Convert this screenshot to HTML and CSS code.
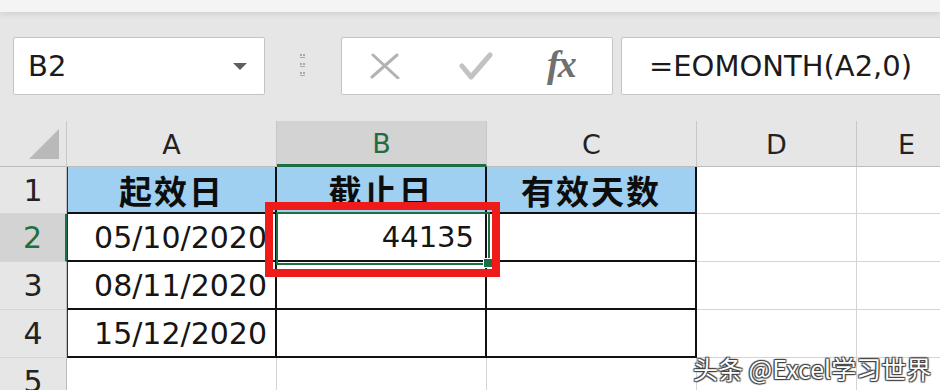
FILE: index.html
```html
<!DOCTYPE html>
<html lang="zh">
<head>
  <meta charset="UTF-8" />
  <title>EOMONTH</title>
  <link rel="stylesheet" href="styles.css">
</head>
<body>
  <div class="top"></div>

  <div class="fbar">
    <div class="namebox">
      <span>B2</span>
      <svg class="caret" width="14" height="8" viewBox="0 0 14 8"><path d="M0 0 L14 0 L7 7 Z" fill="#5f5f5f"/></svg>
    </div>
    <div class="grip">
      <svg width="8" height="26" viewBox="0 0 8 26">
        <g fill="#a8a8a8">
          <rect x="1" y="1" width="2" height="2"/><rect x="4" y="1" width="2" height="2"/><rect x="1" y="4" width="5" height="1"/>
          <rect x="1" y="10" width="2" height="2"/><rect x="4" y="10" width="2" height="2"/><rect x="1" y="13" width="5" height="1"/>
          <rect x="1" y="19" width="2" height="2"/><rect x="4" y="19" width="2" height="2"/><rect x="1" y="22" width="5" height="1"/>
        </g>
      </svg>
    </div>
    <div class="fxbtns">
      <svg class="ic-x" width="30" height="26" viewBox="0 0 30 26">
        <path d="M3 2 L28 25 M27 2 L2 24" stroke="#b3b3b3" stroke-width="3" stroke-linecap="round" fill="none"/>
      </svg>
      <svg class="ic-ok" width="34" height="28" viewBox="0 0 34 28">
        <path d="M3 14 L12 25 L31 3" stroke="#c2c2c2" stroke-width="5" stroke-linecap="round" stroke-linejoin="round" fill="none"/>
      </svg>
      <span class="ic-fx">fx</span>
    </div>
    <div class="formula">=EOMONTH(A2,0)</div>
  </div>

  <div class="sheet">
    <div class="ch corner"><svg width="32" height="32" viewBox="0 0 32 32"><path d="M1 31 L31 31 L31 1 Z" fill="#b9b9b9"/></svg></div>
    <div class="ch">A</div>
    <div class="ch sel">B</div>
    <div class="ch">C</div>
    <div class="ch">D</div>
    <div class="ch">E</div>

    <div class="rh">1</div>
    <div class="c t a h">起效日</div>
    <div class="c t h">截止日</div>
    <div class="c t h">有效天数</div>
    <div class="c"></div>
    <div class="c"></div>

    <div class="rh sel">2</div>
    <div class="c t a num">05/10/2020</div>
    <div class="c t num">44135</div>
    <div class="c t"></div>
    <div class="c"></div>
    <div class="c"></div>

    <div class="rh">3</div>
    <div class="c t a num">08/11/2020</div>
    <div class="c t"></div>
    <div class="c t"></div>
    <div class="c"></div>
    <div class="c"></div>

    <div class="rh">4</div>
    <div class="c t a num">15/12/2020</div>
    <div class="c t"></div>
    <div class="c t"></div>
    <div class="c"></div>
    <div class="c"></div>

    <div class="rh">5</div>
    <div class="c"></div>
    <div class="c"></div>
    <div class="c"></div>
    <div class="c"></div>
    <div class="c"></div>

    <div class="active-cell"><span class="handle"></span></div>
    <div class="mark"></div>
  </div>

  <div class="watermark">头条 @Excel学习世界</div>
</body>
</html>
```

FILE: styles.css
```css
body {
  margin: 0;
  width: 940px; height: 390px;
  overflow: hidden;
  position: relative;
  background: #e6e6e6;
  font-family: "DejaVu Sans", "Noto Sans CJK SC", sans-serif;
  color: #1b1b1b;
}
.top {
  height: 12px;
  background: #f4f4f4;
  box-shadow: 0 2px 6px rgba(0,0,0,0.10);
}

/* formula bar */
.fbar {
  display: flex; align-items: stretch;
  padding: 25px 0 0 13px;
  height: 58px;
}
.fbar > * { flex-shrink: 0; }
.namebox, .fxbtns, .formula {
  background: #fff;
  border: 1px solid #c4c4c4;
  border-radius: 2px;
  box-sizing: border-box;
}
.namebox {
  width: 252px;
  display: flex; align-items: center; justify-content: space-between;
  padding: 0 17px 0 14px;
  font-size: 29px;
}
.caret { margin-top: 2px; }
.grip {
  width: 76px;
  display: flex; align-items: center;
  padding-left: 34px; box-sizing: border-box;
}
.fxbtns {
  width: 272px;
  display: flex; align-items: center;
}
.ic-x { margin-left: 28px; }
.ic-ok { margin-left: 59px; }
.ic-fx {
  margin-left: 54px;
  font-family: "Liberation Serif", "DejaVu Serif", serif;
  font-style: italic;
  font-weight: 700;
  font-size: 38px;
  color: #707070;
  letter-spacing: -2px;
  margin-top: -4px;
}
.formula {
  width: 340px;
  margin-left: 8px;
  display: flex; align-items: center;
  padding-left: 27px;
  font-size: 29px;
  white-space: nowrap;
}

/* sheet */
.sheet {
  position: relative;
  margin-top: 26px;
  display: grid;
  grid-template-columns: 67px 210px 210px 210px 160px 100px;
  grid-template-rows: 46px 47px 48px 48px 48px 48px;
}
.ch, .rh, .c { box-sizing: border-box; }
.ch {
  display: flex; align-items: center; justify-content: center;
  border-right: 1px solid #c8c8c8;
  border-bottom: 1px solid #bcbcbc;
  font-size: 27px;
  color: #222;
  padding-top: 2px;
}
.ch.corner { justify-content: flex-end; align-items: flex-end; padding: 0 6px 6px 0; }
.ch.sel {
  background: #d3d3d3;
  color: #1f6e43;
  border-bottom: 3px solid #1f6e43;
}
.rh {
  display: flex; align-items: center; justify-content: center;
  border-right: 1px solid #bcbcbc;
  border-bottom: 1px solid #d6d6d6;
  font-size: 30px;
  color: #222;
}
.rh.sel {
  background: #d3d3d3;
  color: #1f6e43;
  border-right: 2px solid #1f6e43;
}
.c {
  background: #fff;
  border-right: 1px solid #d4d4d4;
  border-bottom: 1px solid #d4d4d4;
}
.c.t {
  border-right: 2px solid #111;
  border-bottom: 2px solid #111;
}
.c.a { border-left: 1px solid #333; }
.c.h {
  background: #9fcff1;
  display: flex; align-items: center; justify-content: center;
  font-family: "Noto Sans CJK SC", sans-serif;
  font-weight: 700;
  font-size: 33px;
  letter-spacing: 2px;
  color: #0d0d0d;
}
.c.num {
  display: flex; align-items: center; justify-content: flex-end;
  padding-right: 8px;
  font-size: 30px;
  color: #151515;
}
.c.num + .c.num { font-size: 29px; padding-right: 11px; }

/* selection and highlight */
.active-cell {
  position: absolute;
  left: 276px; top: 91px;
  width: 214px; height: 53px;
  border: 2px solid #1f6e43;
  box-sizing: border-box;
}
.handle {
  position: absolute;
  right: -5px; bottom: -5px;
  width: 8px; height: 8px;
  background: #1f6e43;
  border: 1px solid #fff;
}
.mark {
  position: absolute;
  left: 265px; top: 81px;
  width: 235px; height: 75px;
  border: 8px solid #ef1b1b;
  box-sizing: border-box;
}
.watermark {
  position: absolute;
  left: 693px; top: 350px;
  font-family: "Noto Sans CJK SC", sans-serif;
  font-size: 25px;
  color: #fff;
  white-space: nowrap;
  text-shadow: 0 0 1px #333, 1px 1px 1px #444, -1px -1px 1px #444, 1px -1px 1px #444, -1px 1px 1px #444;
}
```
